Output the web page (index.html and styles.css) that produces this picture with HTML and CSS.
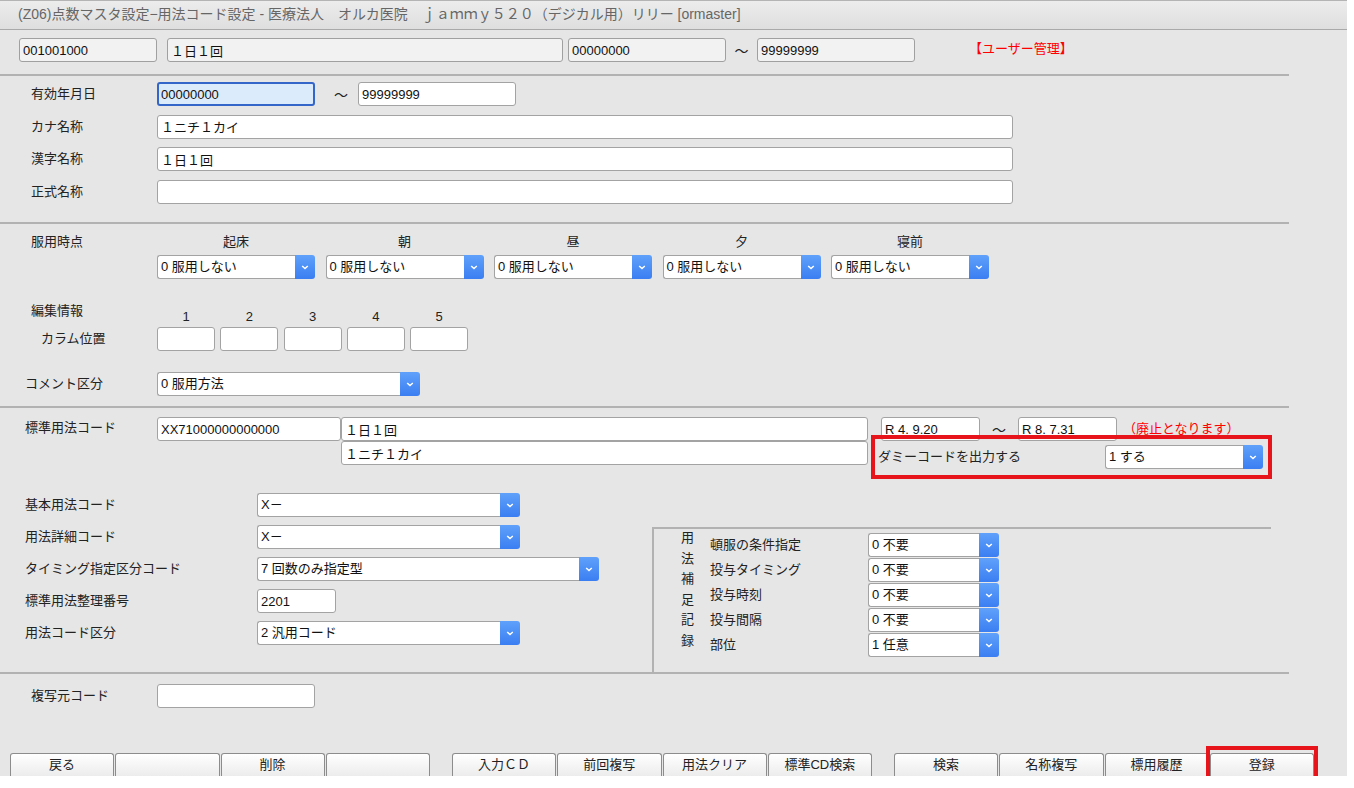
FILE: index.html
```html
<!DOCTYPE html>
<html lang="ja">
    <head>
        <meta charset="UTF-8">
        <meta name="viewport" content="width=device-width, initial-scale=1.0">
        <title>点数マスタ設定−用法コード設定</title>
        <link rel="stylesheet" href="styles.css">
    </head>
    <body>
        <div class="app">
            <div class="titlebar">(Z06)点数マスタ設定−用法コード設定 - 医療法人　オルカ医院　ｊａｍｍｙ５２０（デジカル用）リリー [ormaster]</div>

            <div class="sec header">
                <input class="ro w-code" value="001001000" readonly>
                <input class="ro w-hname" value="１日１回" readonly>
                <input class="ro w-hdate from" value="00000000" readonly>
                <span class="tilde t-head">～</span>
                <input class="ro w-hdate" value="99999999" readonly>
                <span class="red user">【ユーザー管理】</span>
            </div>

            <div class="sec names">
                <div class="row">
                    <div class="lbl">有効年月日</div>
                    <input class="focus w158" value="00000000">
                    <span class="tilde t-valid">～</span>
                    <input class="w158" value="99999999">
                </div>
                <div class="row">
                    <div class="lbl">カナ名称</div>
                    <input class="w-long" value="１ニチ１カイ">
                </div>
                <div class="row">
                    <div class="lbl">漢字名称</div>
                    <input class="w-long" value="１日１回">
                </div>
                <div class="row">
                    <div class="lbl">正式名称</div>
                    <input class="w-long" value="">
                </div>
            </div>

            <div class="sec fukuyo">
                <div class="timing">
                    <div class="lbl top">服用時点</div>
                    <div class="cols">
                        <div class="col">
                            <div class="colhead">起床</div>
                            <div class="sel w158"><span class="sel-val">0 服用しない</span><span class="sel-btn"><svg width="8" height="5" viewBox="0 0 8 5"><path d="M1.2 1l2.8 2.6L6.8 1" fill="none" stroke="#fff" stroke-width="1.5"/></svg></span></div>
                        </div>
                        <div class="col">
                            <div class="colhead">朝</div>
                            <div class="sel w158"><span class="sel-val">0 服用しない</span><span class="sel-btn"><svg width="8" height="5" viewBox="0 0 8 5"><path d="M1.2 1l2.8 2.6L6.8 1" fill="none" stroke="#fff" stroke-width="1.5"/></svg></span></div>
                        </div>
                        <div class="col">
                            <div class="colhead">昼</div>
                            <div class="sel w158"><span class="sel-val">0 服用しない</span><span class="sel-btn"><svg width="8" height="5" viewBox="0 0 8 5"><path d="M1.2 1l2.8 2.6L6.8 1" fill="none" stroke="#fff" stroke-width="1.5"/></svg></span></div>
                        </div>
                        <div class="col">
                            <div class="colhead">夕</div>
                            <div class="sel w158"><span class="sel-val">0 服用しない</span><span class="sel-btn"><svg width="8" height="5" viewBox="0 0 8 5"><path d="M1.2 1l2.8 2.6L6.8 1" fill="none" stroke="#fff" stroke-width="1.5"/></svg></span></div>
                        </div>
                        <div class="col">
                            <div class="colhead">寝前</div>
                            <div class="sel w158"><span class="sel-val">0 服用しない</span><span class="sel-btn"><svg width="8" height="5" viewBox="0 0 8 5"><path d="M1.2 1l2.8 2.6L6.8 1" fill="none" stroke="#fff" stroke-width="1.5"/></svg></span></div>
                        </div>
                    </div>
                </div>

                <div class="edit">
                    <div class="lbl top">
                        <div class="edit-title">編集情報</div>
                        <div class="edit-sub">カラム位置</div>
                    </div>
                    <div class="cols small">
                        <div class="col"><div class="num">1</div><input class="w58"></div>
                        <div class="col"><div class="num">2</div><input class="w58"></div>
                        <div class="col"><div class="num">3</div><input class="w58"></div>
                        <div class="col"><div class="num">4</div><input class="w58"></div>
                        <div class="col"><div class="num">5</div><input class="w58"></div>
                    </div>
                </div>

                <div class="row comment">
                    <div class="lbl l25">コメント区分</div>
                    <div class="sel w263"><span class="sel-val">0 服用方法</span><span class="sel-btn"><svg width="8" height="5" viewBox="0 0 8 5"><path d="M1.2 1l2.8 2.6L6.8 1" fill="none" stroke="#fff" stroke-width="1.5"/></svg></span></div>
                </div>
            </div>

            <div class="sec std">
                <div class="std-row">
                    <div class="lbl l25">標準用法コード</div>
                    <input class="w-stdcode" value="XX71000000000000">
                    <div class="std-names">
                        <input class="w-stdname" value="１日１回">
                        <input class="w-stdname" value="１ニチ１カイ">
                    </div>
                    <div class="std-right">
                        <div class="dates">
                            <input class="w99" value="R 4. 9.20">
                            <span class="tilde t-std">～</span>
                            <input class="w99" value="R 8. 7.31">
                            <span class="red haishi">（廃止となります）</span>
                        </div>
                        <div class="dummy">
                            <div class="dummy-lbl">ダミーコードを出力する</div>
                            <div class="sel w158"><span class="sel-val">1 する</span><span class="sel-btn"><svg width="8" height="5" viewBox="0 0 8 5"><path d="M1.2 1l2.8 2.6L6.8 1" fill="none" stroke="#fff" stroke-width="1.5"/></svg></span></div>
                        </div>
                    </div>
                </div>

                <div class="lower">
                    <div class="lower-left">
                        <div class="row">
                            <div class="lbl wide">基本用法コード</div>
                            <div class="sel w263"><span class="sel-val">X－</span><span class="sel-btn"><svg width="8" height="5" viewBox="0 0 8 5"><path d="M1.2 1l2.8 2.6L6.8 1" fill="none" stroke="#fff" stroke-width="1.5"/></svg></span></div>
                        </div>
                        <div class="row">
                            <div class="lbl wide">用法詳細コード</div>
                            <div class="sel w263"><span class="sel-val">X－</span><span class="sel-btn"><svg width="8" height="5" viewBox="0 0 8 5"><path d="M1.2 1l2.8 2.6L6.8 1" fill="none" stroke="#fff" stroke-width="1.5"/></svg></span></div>
                        </div>
                        <div class="row">
                            <div class="lbl wide">タイミング指定区分コード</div>
                            <div class="sel w342"><span class="sel-val">7 回数のみ指定型</span><span class="sel-btn"><svg width="8" height="5" viewBox="0 0 8 5"><path d="M1.2 1l2.8 2.6L6.8 1" fill="none" stroke="#fff" stroke-width="1.5"/></svg></span></div>
                        </div>
                        <div class="row">
                            <div class="lbl wide">標準用法整理番号</div>
                            <input class="w79" value="2201">
                        </div>
                        <div class="row">
                            <div class="lbl wide">用法コード区分</div>
                            <div class="sel w263"><span class="sel-val">2 汎用コード</span><span class="sel-btn"><svg width="8" height="5" viewBox="0 0 8 5"><path d="M1.2 1l2.8 2.6L6.8 1" fill="none" stroke="#fff" stroke-width="1.5"/></svg></span></div>
                        </div>
                    </div>

                    <div class="hosoku">
                        <div class="vtext">用法補足記録</div>
                        <div class="hosoku-grid">
                            <div class="hlbl">頓服の条件指定</div>
                            <div class="sel w131"><span class="sel-val">0 不要</span><span class="sel-btn"><svg width="8" height="5" viewBox="0 0 8 5"><path d="M1.2 1l2.8 2.6L6.8 1" fill="none" stroke="#fff" stroke-width="1.5"/></svg></span></div>
                            <div class="hlbl">投与タイミング</div>
                            <div class="sel w131"><span class="sel-val">0 不要</span><span class="sel-btn"><svg width="8" height="5" viewBox="0 0 8 5"><path d="M1.2 1l2.8 2.6L6.8 1" fill="none" stroke="#fff" stroke-width="1.5"/></svg></span></div>
                            <div class="hlbl">投与時刻</div>
                            <div class="sel w131"><span class="sel-val">0 不要</span><span class="sel-btn"><svg width="8" height="5" viewBox="0 0 8 5"><path d="M1.2 1l2.8 2.6L6.8 1" fill="none" stroke="#fff" stroke-width="1.5"/></svg></span></div>
                            <div class="hlbl">投与間隔</div>
                            <div class="sel w131"><span class="sel-val">0 不要</span><span class="sel-btn"><svg width="8" height="5" viewBox="0 0 8 5"><path d="M1.2 1l2.8 2.6L6.8 1" fill="none" stroke="#fff" stroke-width="1.5"/></svg></span></div>
                            <div class="hlbl">部位</div>
                            <div class="sel w131"><span class="sel-val">1 任意</span><span class="sel-btn"><svg width="8" height="5" viewBox="0 0 8 5"><path d="M1.2 1l2.8 2.6L6.8 1" fill="none" stroke="#fff" stroke-width="1.5"/></svg></span></div>
                        </div>
                    </div>
                </div>
            </div>

            <div class="copy">
                <div class="row">
                    <div class="lbl">複写元コード</div>
                    <input class="w158" value="">
                </div>
            </div>

            <div class="footer">
                <div class="group">
                    <div class="btn">戻る</div>
                    <div class="btn"></div>
                    <div class="btn">削除</div>
                    <div class="btn"></div>
                </div>
                <div class="group">
                    <div class="btn">入力ＣＤ</div>
                    <div class="btn">前回複写</div>
                    <div class="btn">用法クリア</div>
                    <div class="btn">標準CD検索</div>
                </div>
                <div class="group">
                    <div class="btn">検索</div>
                    <div class="btn">名称複写</div>
                    <div class="btn">標用履歴</div>
                    <div class="btn mark">登録</div>
                </div>
            </div>
        </div>
    </body>
</html>
```

FILE: styles.css
```css
:root{
    --line: #b2b2b2;
    --red: #e8141c;
}
*{
    padding: 0;
    margin: 0;
    box-sizing: border-box;
}
body{
    background: #fff;
    font-family: "Liberation Sans", "Noto Sans CJK JP", sans-serif;
    font-size: 13px;
    color: #222;
}
.app{width: 1347px; height: 776px; background: #e6e6e6;}
.titlebar{
    height: 30px;
    border-top: 1px solid #b4b4b4;
    border-bottom: 1px solid #a9a9a9;
    background: linear-gradient(#ececec, #dedede);
    color: #666;
    padding-left: 18px;
    font-size: 14px;
    line-height: 27px;
    white-space: nowrap;
}
.sec{width: 1289px; border-bottom: 2px solid var(--line);}

input{
    font: inherit;
    color: #111;
    height: 24px;
    border: 1px solid #a3a3a3;
    border-radius: 3px;
    background: #fff;
    padding: 0 3px;
    outline: none;
}
input.ro{background: #f2f2f2; border-color: #a0a0a0;}
input.focus{background: #dcebfb; border: 2px solid #3465c9; padding: 0 2px;}

.w58{width: 58px;}
.w79{width: 79px;}
.w99{width: 99px;}
.w131{width: 131px;}
.w158{width: 158px;}
.w263{width: 263px;}
.w342{width: 342px;}
.w-code{width: 138px;}
.w-hname{width: 396px; margin-left: 10px;}
.w-hdate{width: 158px;}
.w-hdate.from{margin-left: 5px;}
.w-long{width: 856px;}
.w-stdcode{width: 184px;}
.w-stdname{width: 527px; display: block;}

.red{color: #f00;}
.tilde{display: inline-block; text-align: center; font-size: 14px;}
.t-head{width: 31px;}
.t-valid{width: 43px; padding-left: 9px;}
.t-std{width: 38px;}
.user{margin-left: 54px; padding-bottom: 5px;}

/* select boxes */
.sel{display: flex; height: 24px; border-radius: 3px;}
.sel-val{
    flex: 1;
    background: #fff;
    border: 1px solid #a3a3a3;
    border-right: none;
    border-radius: 3px 0 0 3px;
    padding: 0 3px;
    line-height: 22px;
    color: #111;
    white-space: nowrap;
    overflow: hidden;
}
.sel-btn{
    width: 20px;
    background: linear-gradient(#5fa1fa, #3b7ef2);
    border-radius: 0 3px 3px 0;
    display: flex;
    align-items: center;
    justify-content: center;
}

.row{display: flex; align-items: center; height: 24px;}
.lbl{width: 157px; padding-left: 31px; white-space: nowrap; flex-shrink: 0;}
.row > .lbl{padding-bottom: 3px;}
.lbl.l25{padding-left: 25px;}
.lbl.top{align-self: flex-start; line-height: 16px;}

/* header */
.header{display: flex; align-items: center; height: 46px; padding: 8px 0 12px 19px;}

/* names */
.names{display: flex; flex-direction: column; gap: 8.5px; padding: 6px 0 18.5px;}

/* fukuyo */
.fukuyo{padding: 10px 0 10px;}
.timing, .edit{display: flex;}
.cols{display: flex; gap: 10.5px;}
.colhead{text-align: center; line-height: 16px; margin-bottom: 5px;}
.edit{margin-top: 24px;}
.edit-sub{margin-top: 12px; padding-left: 10px;}
.cols.small{gap: 5.25px;}
.num{text-align: center; line-height: 16px; margin: 6px 0 2px;}
.comment{margin-top: 21px;}

/* standard code */
.std{padding-top: 9px;}
.std-row{display: flex; align-items: flex-start;}
.std-row > .lbl{line-height: 22px;}
.std-right{margin-left: 10px;}
.dates{display: flex; align-items: center; padding-left: 3px;}
.haishi{margin-left: 6px; padding-bottom: 3px;}
.dummy{display: flex; align-items: center; margin-top: 4px; position: relative;}
.dummy::before{
    content: "";
    position: absolute;
    top: -10px; bottom: -10px; left: -7px; right: -9px;
    border: 4px solid var(--red);
}
.dummy-lbl{width: 227px; padding-bottom: 3px;}

.lower{display: flex; height: 179px; margin-top: 24px;}
.lower-left{width: 652px; display: flex; flex-direction: column; gap: 8px;}
.lbl.wide{width: 257px; padding-left: 25px;}
.hosoku{
    width: 619px;
    margin-top: 34px;
    border-top: 2px solid var(--line);
    border-left: 2px solid var(--line);
    display: flex;
    padding-top: 4px;
}
.vtext{width: 14px; margin: -5px 0 0 27px; line-height: 20.5px;}
.hosoku-grid{
    margin-left: 15px;
    display: grid;
    grid-template-columns: 158px 131px;
    grid-auto-rows: 24px;
    row-gap: 1px;
    align-items: center;
}
.hlbl{padding-bottom: 3px;}

/* copy */
.copy{padding-top: 10px;}

/* footer */
.footer{display: flex; gap: 22px; padding-left: 10px; margin-top: 45px;}
.group{display: flex; gap: 1px; width: 420px;}
.btn{
    flex: 1;
    height: 23px;
    background: linear-gradient(#ffffff, #ececec);
    border: 1px solid #8c8c8c;
    border-bottom: none;
    border-radius: 3px 3px 0 0;
    text-align: center;
    line-height: 22px;
    color: #222;
}
.btn.mark{position: relative;}
.btn.mark::after{
    content: "";
    position: absolute;
    top: -8px; bottom: -7px; left: -5px; right: -5px;
    border: 4px solid var(--red);
}
```
